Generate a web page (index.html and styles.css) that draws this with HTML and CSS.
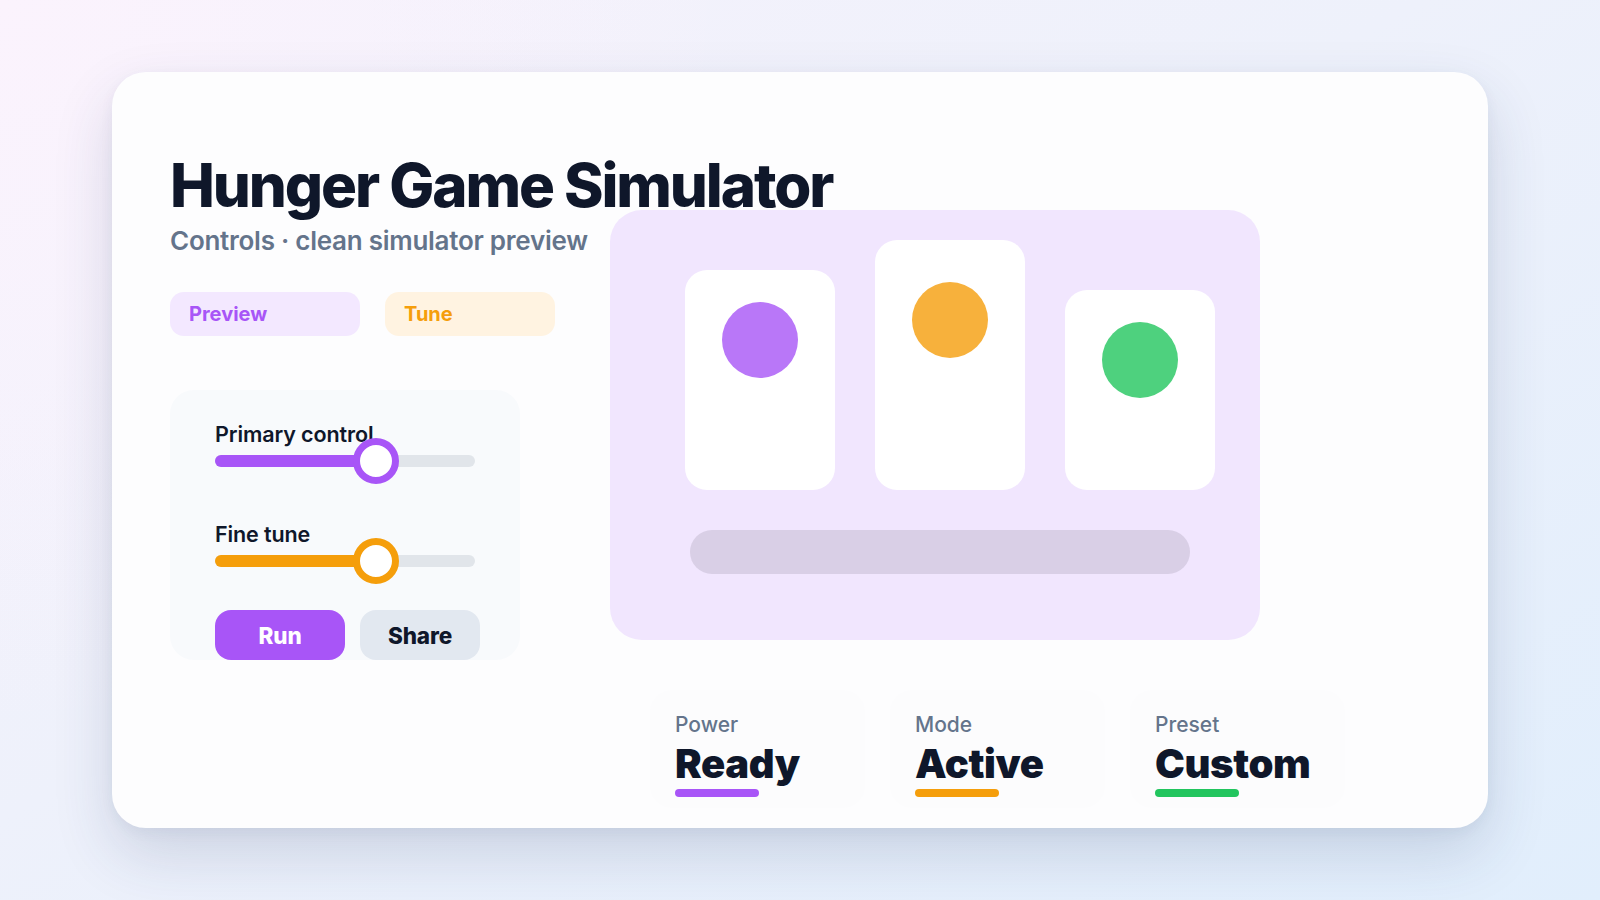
FILE: index.html
```html
<!DOCTYPE html>
<html lang="en">
<head>
<meta charset="utf-8">
<title>Hunger Game Simulator</title>
<link rel="stylesheet" href="styles.css">
</head>
<body>
<main class="card">
  <h1 class="title">Hunger Game Simulator</h1>
  <div class="layout">
    <section class="left">
      <p class="subtitle">Controls · clean simulator preview</p>
      <div class="pills">
        <span class="pill pill-purple">Preview</span>
        <span class="pill pill-orange">Tune</span>
      </div>
      <div class="controls">
        <div class="control">
          <div class="label">Primary control</div>
          <div class="track">
            <div class="fill fill-purple" style="width: 62%"></div>
            <div class="thumb thumb-purple" style="left: 62%"></div>
          </div>
        </div>
        <div class="control">
          <div class="label">Fine tune</div>
          <div class="track">
            <div class="fill fill-orange" style="width: 62%"></div>
            <div class="thumb thumb-orange" style="left: 62%"></div>
          </div>
        </div>
        <div class="buttons">
          <button class="btn btn-run">Run</button>
          <button class="btn btn-share">Share</button>
        </div>
      </div>
    </section>
    <section class="preview">
      <div class="tiles">
        <div class="tile tile-1"><div class="dot dot-purple"></div></div>
        <div class="tile tile-2"><div class="dot dot-orange"></div></div>
        <div class="tile tile-3"><div class="dot dot-green"></div></div>
      </div>
      <div class="bar"></div>
    </section>
  </div>
  <div class="stats">
    <div class="stat">
      <div class="stat-label">Power</div>
      <div class="stat-value">Ready</div>
      <div class="stat-line line-purple"></div>
    </div>
    <div class="stat">
      <div class="stat-label">Mode</div>
      <div class="stat-value">Active</div>
      <div class="stat-line line-orange"></div>
    </div>
    <div class="stat">
      <div class="stat-label">Preset</div>
      <div class="stat-value">Custom</div>
      <div class="stat-line line-green"></div>
    </div>
  </div>
</main>
</body>
</html>
```

FILE: styles.css
```css
* { box-sizing: border-box; }

html, body {
  margin: 0;
  padding: 0;
}

body {
  width: 1600px;
  height: 900px;
  overflow: hidden;
  font-family: Inter, "Noto Sans", "Liberation Sans", sans-serif;
  background:
    radial-gradient(circle at 0% 0%, #fbf3fd 0%, rgba(251,243,253,0) 40%),
    linear-gradient(150deg, #f6f2fc 0%, #eef1fb 45%, #e1eefc 100%);
  padding: 72px 0 0 112px;
}

.card {
  width: 1376px;
  height: 756px;
  background: #fdfdfe;
  border-radius: 34px;
  box-shadow: 0 26px 60px rgba(40, 55, 100, 0.16), 0 4px 14px rgba(40, 55, 100, 0.05);
  padding: 88px 0 0 58px;
}

.title {
  margin: 0;
  font-size: 60px;
  line-height: 50px;
  font-weight: 800;
  letter-spacing: -0.035em;
  color: #0f172a;
  white-space: nowrap;
}

.layout {
  display: grid;
  grid-template-columns: 440px 650px;
  align-items: start;
}

.left {
  display: flex;
  flex-direction: column;
  align-items: flex-start;
}

.subtitle {
  margin: 15px 0 0 0;
  font-size: 26px;
  line-height: 31px;
  font-weight: 600;
  letter-spacing: -0.01em;
  color: #64748b;
}

.pills {
  display: flex;
  gap: 25px;
  margin-top: 36px;
}

.pill {
  height: 44px;
  border-radius: 14px;
  padding: 0 19px;
  display: flex;
  align-items: center;
  font-size: 20px;
  font-weight: 700;
}

.pill-purple {
  width: 190px;
  background: #f3e8ff;
  color: #a855f7;
}

.pill-orange {
  width: 170px;
  background: #fff3e1;
  color: #f59e0b;
}

.controls {
  margin-top: 54px;
  width: 350px;
  height: 270px;
  background: #f8fafc;
  border-radius: 24px;
  padding: 32px 45px 0 45px;
}

.control + .control {
  margin-top: 55px;
}

.label {
  font-size: 21.5px;
  line-height: 24px;
  font-weight: 600;
  color: #0f172a;
  letter-spacing: -0.005em;
}

.track {
  position: relative;
  margin-top: 9px;
  height: 12px;
  border-radius: 6px;
  background: #e1e5ea;
}

.fill {
  height: 100%;
  border-radius: 6px;
}

.fill-purple { background: #a855f7; }
.fill-orange { background: #f59e0b; }

.thumb {
  position: absolute;
  top: 50%;
  width: 46px;
  height: 46px;
  margin: -23px 0 0 -23px;
  border-radius: 50%;
  background: #ffffff;
  border: 7px solid;
}

.thumb-purple { border-color: #a855f7; }
.thumb-orange { border-color: #f59e0b; }

.buttons {
  display: flex;
  gap: 15px;
  margin-top: 43px;
}

.btn {
  flex-shrink: 0;
  height: 50px;
  border: none;
  border-radius: 16px;
  font-family: inherit;
  font-size: 22.5px;
  font-weight: 800;
  letter-spacing: -0.005em;
  padding: 0;
}

.btn-run {
  width: 130px;
  background: #a855f7;
  color: #ffffff;
}

.btn-share {
  width: 120px;
  background: #e2e8f0;
  color: #0f172a;
}

.preview {
  width: 650px;
  height: 430px;
  background: #f1e6fe;
  border-radius: 32px;
  padding: 30px 45px 0 75px;
}

.tiles {
  display: flex;
  align-items: flex-end;
  gap: 40px;
  height: 250px;
}

.tile {
  width: 150px;
  background: #ffffff;
  border-radius: 22px;
  display: flex;
  justify-content: center;
}

.tile-1 { height: 220px; padding-top: 32px; }
.tile-2 { height: 250px; padding-top: 42px; }
.tile-3 { height: 200px; padding-top: 32px; }

.dot {
  width: 76px;
  height: 76px;
  border-radius: 50%;
}

.dot-purple { background: #b977f8; }
.dot-orange { background: #f7b13c; }
.dot-green { background: #4ed17e; }

.bar {
  margin: 40px 0 0 5px;
  width: 500px;
  height: 44px;
  border-radius: 22px;
  background: #d9cfe6;
}

.stats {
  display: flex;
  gap: 25px;
  margin: 30px 0 0 480px;
}

.stat {
  width: 215px;
  height: 118px;
  border-radius: 22px;
  background: #fcfcfd;
  padding: 23px 25px 0 25px;
}

.stat-label {
  font-size: 21px;
  line-height: 24px;
  font-weight: 500;
  color: #64748b;
}

.stat-value {
  margin-top: 4px;
  font-size: 40px;
  line-height: 46px;
  font-weight: 900;
  letter-spacing: -0.01em;
  color: #0f172a;
}

.stat-line {
  margin-top: 2px;
  width: 84px;
  height: 8px;
  border-radius: 4px;
}

.line-purple { background: #a855f7; }
.line-orange { background: #f59e0b; }
.line-green { background: #22c55e; }
```
